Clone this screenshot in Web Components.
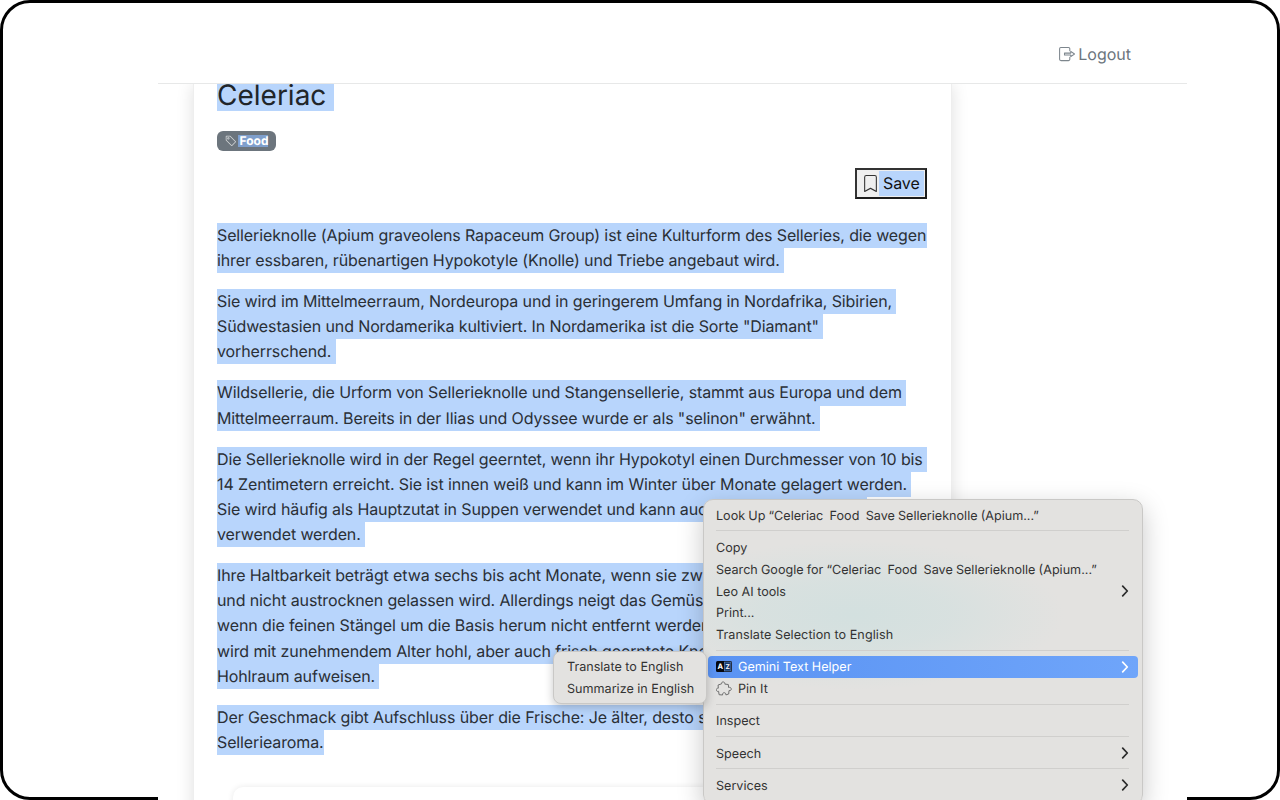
<!DOCTYPE html>
<html lang="de">
<head>
<meta charset="utf-8">
<title>Celeriac</title>
<style>
html,body{margin:0;padding:0;background:#fff;height:800px;overflow:hidden}
body{font-family:Inter,"Liberation Sans",sans-serif;color:#212529;text-rendering:geometricPrecision}
</style>
</head>
<body>
<app-shell>
  <top-bar></top-bar>
  <article-card>
    <sel-line slot="title">Celeriac </sel-line>
    <tag-badge slot="tags">Food</tag-badge>
    <save-button slot="actions">Save</save-button>
    <sel-para>
      <sel-line style="padding-right:1px">Sellerieknolle (Apium graveolens Rapaceum Group) ist eine Kulturform des Selleries, die wegen</sel-line>
      <sel-line>ihrer essbaren, rübenartigen Hypokotyle (Knolle) und Triebe angebaut wird. </sel-line>
    </sel-para>
    <sel-para>
      <sel-line>Sie wird im Mittelmeerraum, Nordeuropa und in geringerem Umfang in Nordafrika, Sibirien, </sel-line>
      <sel-line>Südwestasien und Nordamerika kultiviert. In Nordamerika ist die Sorte "Diamant" </sel-line>
      <sel-line>vorherrschend. </sel-line>
    </sel-para>
    <sel-para>
      <sel-line>Wildsellerie, die Urform von Sellerieknolle und Stangensellerie, stammt aus Europa und dem </sel-line>
      <sel-line>Mittelmeerraum. Bereits in der Ilias und Odyssee wurde er als "selinon" erwähnt. </sel-line>
    </sel-para>
    <sel-para>
      <sel-line>Die Sellerieknolle wird in der Regel geerntet, wenn ihr Hypokotyl einen Durchmesser von 10 bis </sel-line>
      <sel-line>14 Zentimetern erreicht. Sie ist innen weiß und kann im Winter über Monate gelagert werden. </sel-line>
      <sel-line>Sie wird häufig als Hauptzutat in Suppen verwendet und kann auch als Gemüsebeilage </sel-line>
      <sel-line>verwendet werden. </sel-line>
    </sel-para>
    <sel-para style="--lh:25.2px">
      <sel-line>Ihre Haltbarkeit beträgt etwa sechs bis acht Monate, wenn sie zwischen 0 und 5 °C gelagert </sel-line>
      <sel-line>und nicht austrocknen gelassen wird. Allerdings neigt das Gemüse zum Verderb, </sel-line>
      <sel-line>wenn die feinen Stängel um die Basis herum nicht entfernt werden. Die Knolle </sel-line>
      <sel-line>wird mit zunehmendem Alter hohl, aber auch frisch geerntete Knollen können einen </sel-line>
      <sel-line>Hohlraum aufweisen. </sel-line>
    </sel-para>
    <sel-para>
      <sel-line>Der Geschmack gibt Aufschluss über die Frische: Je älter, desto stärker das </sel-line>
      <sel-line>Selleriearoma.</sel-line>
    </sel-para>
    <inner-card slot="footer"></inner-card>
  </article-card>
  <ctx-menu slot="overlay" class="main">
    <ctx-item style="word-spacing:-.38px">Look Up “Celeriac  Food  Save Sellerieknolle (Apium...”</ctx-item>
    <ctx-sep></ctx-sep>
    <ctx-item>Copy</ctx-item>
    <ctx-item style="word-spacing:-.38px">Search Google for “Celeriac  Food  Save Sellerieknolle (Apium...”</ctx-item>
    <ctx-item arrow>Leo AI tools</ctx-item>
    <ctx-item>Print...</ctx-item>
    <ctx-item style="letter-spacing:.07px">Translate Selection to English</ctx-item>
    <ctx-sep></ctx-sep>
    <ctx-item arrow active icon="az">Gemini Text Helper</ctx-item>
    <ctx-item icon="puzzle">Pin It</ctx-item>
    <ctx-sep></ctx-sep>
    <ctx-item>Inspect</ctx-item>
    <ctx-sep></ctx-sep>
    <ctx-item arrow>Speech</ctx-item>
    <ctx-sep></ctx-sep>
    <ctx-item arrow>Services</ctx-item>
  </ctx-menu>
  <ctx-menu slot="overlay" class="sub">
    <ctx-item>Translate to English</ctx-item>
    <ctx-item>Summarize in English</ctx-item>
  </ctx-menu>
</app-shell>
<script>
function def(name, html, extra){
  const t=document.createElement('template');t.innerHTML=html;
  customElements.define(name,class extends HTMLElement{
    constructor(){super();this.attachShadow({mode:'open'}).appendChild(t.content.cloneNode(true));}
    connectedCallback(){extra&&extra(this)}
  });
}
function frag(html){const t=document.createElement('template');t.innerHTML=html;return t.content;}
def('app-shell',`<style>
:host{display:block;position:relative;width:1280px;height:800px;padding-top:3px;box-sizing:border-box;overflow:hidden;background:#fff}
.frame{position:absolute;inset:0;border:3px solid #000;border-radius:30px;box-sizing:border-box}
.page{position:relative;margin-left:158px;width:1029px;height:797px;background:#fff;display:flex;flex-direction:column}
</style><div class="frame"></div><div class="page"><slot></slot></div><slot name="overlay"></slot>`);

def('top-bar',`<style>
:host{display:flex;flex:none;box-sizing:border-box;position:relative;z-index:2;background:#fff;border-bottom:1px solid #e7e8e8;justify-content:flex-end;align-items:flex-end;padding:0 56px 17px 0;height:81px;color:#6c757d;font-size:16px;line-height:24px;font-weight:400}
.l{display:flex;align-items:center;gap:3px}
svg{width:16px;height:16px;display:block}
</style><span class="l"><svg viewBox="0 0 16 16" fill="none" stroke="#7d868d" stroke-width="1.05" stroke-linejoin="round" stroke-linecap="round"><path d="M10.800 4.700V2.700a1.300 1.300 0 0 0-1.300-1.300H1.800A1.300 1.300 0 0 0 .6 2.700v10.600a1.300 1.300 0 0 0 1.200 1.300h7.700a1.300 1.300 0 0 0 1.300-1.300v-2"/><path d="M5.500 7.100h6.300V5.300L15.500 8l-3.700 2.700V8.900H5.500z"/></svg><span>Logout</span></span>`);

def('article-card',`<style>
:host{display:block;flex:1;min-height:0;overflow:hidden;position:relative}
.card{margin:-7px 0 0 35px;width:759px;box-sizing:border-box;background:#fff;border:1px solid #eeeeee;border-width:0 1px;padding:0 24px 0 23px;box-shadow:0 8px 16px rgba(0,0,0,.13);height:900px}
h1{margin:0 0 20px;font-size:28px;font-weight:400;height:34px;color:#212529;--lh:34px;--ll:36px}
.tags{display:flex;height:20px;margin-bottom:17px}
.actions{display:flex;justify-content:flex-end;margin-bottom:24px}
</style><div class="card"><h1><slot name="title"></slot></h1><div class="tags"><slot name="tags"></slot></div><div class="actions"><slot name="actions"></slot></div><slot></slot><slot name="footer"></slot></div>`);

def('sel-line',`<style>
:host{display:block;width:fit-content;background:#b8d5fc;white-space:pre;line-height:var(--ll,var(--lh,25.1px));height:var(--lh,25.1px)}
</style><slot></slot>`);

def('sel-para',`<style>
:host{display:block;font-size:16px;margin-bottom:16px;color:#2a2f36;letter-spacing:-.118px}
</style><slot></slot>`);

def('tag-badge',`<style>
:host{display:inline-flex;align-items:center;height:20px;box-sizing:border-box;padding:0 8px 0 8px;background:#6c757d;border-radius:6px;color:#fff;font-size:12px;font-weight:700;gap:1px}
svg{width:12px;height:12px;display:block;color:#d6d9db}
span{background:#7f9fcc;line-height:12px;padding:0 0 0 1.500px}
</style><svg viewBox="0 0 16 16" fill="currentColor"><path d="M6 4.500a1.500 1.500 0 1 1-3 0 1.500 1.500 0 0 1 3 0m-1 0a.5.5 0 1 0-1 0 .5.5 0 0 0 1 0"/><path d="M2 1h4.586a1 1 0 0 1 .707.293l7 7a1 1 0 0 1 0 1.414l-4.586 4.586a1 1 0 0 1-1.414 0l-7-7A1 1 0 0 1 1 6.586V2a1 1 0 0 1 1-1m0 5.586 7 7L13.586 9l-7-7H2z"/></svg><span><slot></slot></span>`);

def('save-button',`<style>
:host{display:inline-flex;align-items:center;width:72px;height:31px;box-sizing:border-box;border:2px solid #1c1c1c;border-top-color:#333;border-left-color:#333;background:#efefef;font-size:16px;letter-spacing:-.1px;color:#111;padding:1px 1px 1px 5px}
svg{width:17px;height:17px;display:block;flex:none}
.t{background:#b8d5fc;flex:1;align-self:stretch;display:flex;align-items:center;padding:0 0 1px 4px;box-sizing:border-box}
</style><svg viewBox="0 0 16 16" preserveAspectRatio="none" fill="#333"><path d="M2 2a2 2 0 0 1 2-2h8a2 2 0 0 1 2 2v13.500a.5.5 0 0 1-.777.416L8 13.101l-5.223 2.815A.5.5 0 0 1 2 15.500zm2-1a1 1 0 0 0-1 1v12.566l4.723-2.482a.5.5 0 0 1 .554 0L13 14.566V2a1 1 0 0 0-1-1z"/></svg><span class="t"><slot></slot></span>`);

def('inner-card',`<style>
:host{display:block;margin:31.500px 16px 0 15.500px;height:200px;border-radius:10px;background:#fff;box-shadow:0 0 6px rgba(0,0,0,.09)}
</style>`);

def('ctx-menu',`<style>
:host{display:block;position:absolute;box-sizing:border-box;color:#333;font-size:12.600px;font-family:Inter,"Liberation Sans",sans-serif;border:1px solid #c9c8c6;border-radius:10px;background:#e3e2e0;box-shadow:0 8px 26px rgba(0,0,0,.22);padding:4.400px 4px}
:host(.main){z-index:3;left:703px;top:499px;width:440px;height:306px;background:radial-gradient(ellipse 210px 75px at 150px 115px,#d3e0df 0%,rgba(211,224,223,.7) 45%,rgba(227,226,224,0) 100%),linear-gradient(#e3e2e0,#e3e2e0)}
:host(.sub){z-index:4;left:553px;top:651px;width:154px;height:53px;padding:4px 4px 4px 5px;border-radius:8px;box-shadow:0 3px 10px rgba(0,0,0,.22)}
</style><slot></slot>`);

const chev=`<svg class="c" viewBox="0 0 8 12" fill="none" stroke="currentColor" stroke-width="1.700" stroke-linecap="round" stroke-linejoin="round"><path d="M1.700 1.200 6.300 6l-4.600 4.800"/></svg>`;
const icons={
 az:`<svg class="i" viewBox="0 0 16 11"><rect width="16" height="11" rx="1.500" fill="#05070f"/><rect x="8.300" y="1" width="6.700" height="9" fill="#173a6e" stroke="#7fa8e0" stroke-width=".5"/><text x="4.200" y="8.200" font-size="7.500" font-weight="700" fill="#fff" text-anchor="middle" font-family="Inter,sans-serif">A</text><text x="11.700" y="8" font-size="6.500" font-weight="700" fill="#fff" text-anchor="middle" font-family="Inter,sans-serif">Z</text></svg>`,
 puzzle:`<svg class="i p" viewBox="0 0 16 16" fill="none" stroke="#6f6f6f" stroke-width="1" stroke-linejoin="round"><path d="M5.600 2.800C5.300 1.400 6.500.7 7.500 1c1 .2 1.600 1 1.300 2.100l3.500.4.300 3c1.300-.5 2.500.2 2.700 1.300.2 1.200-.9 2-2.300 1.800l-.3 3.400-2.800.9c.2-1.300-.6-2.200-1.700-2.200-1.200 0-1.900 1-1.600 2.300l-3.500-.3-.5-3.400c-1.200.4-2.100-.2-2.300-1.200-.2-1.100.7-2.100 2-1.900L2.100 4z"/></svg>`
};
def('ctx-item',`<style>
:host{display:flex;align-items:center;box-sizing:border-box;height:21.750px;line-height:19.350px;border-radius:4px;padding:2.400px 9px 0 8px;white-space:pre;position:relative}
:host([active]){background:linear-gradient(90deg,#5a93f3,#6fa5fa);color:#fff}
.i{width:16px;height:11px;display:block;margin:-2px 6px 0 0;flex:none}
.i.p{height:16px;width:16px}
.c{position:absolute;right:9px;top:50%;width:8px;height:12px;margin-top:-6px;color:#2b2b2b}
:host([active]) .c{color:#fff}
</style><span id="ic"></span><slot></slot><span id="ar"></span>`,el=>{
  const r=el.shadowRoot;
  const k=el.getAttribute('icon'), ic=r.getElementById('ic'), ar=r.getElementById('ar');
  if(ic){ if(k) ic.replaceWith(frag(icons[k])); else ic.remove(); }
  if(ar){ if(el.hasAttribute('arrow')) ar.replaceWith(frag(chev)); else ar.remove(); }
});

def('ctx-sep',`<style>
:host{display:block;height:10.500px;padding:4.200px 9px 0 8px;box-sizing:border-box}
i{display:block;height:1px;background:#d0cfcd}
</style><i></i>`);
</script>
</body>
</html>
